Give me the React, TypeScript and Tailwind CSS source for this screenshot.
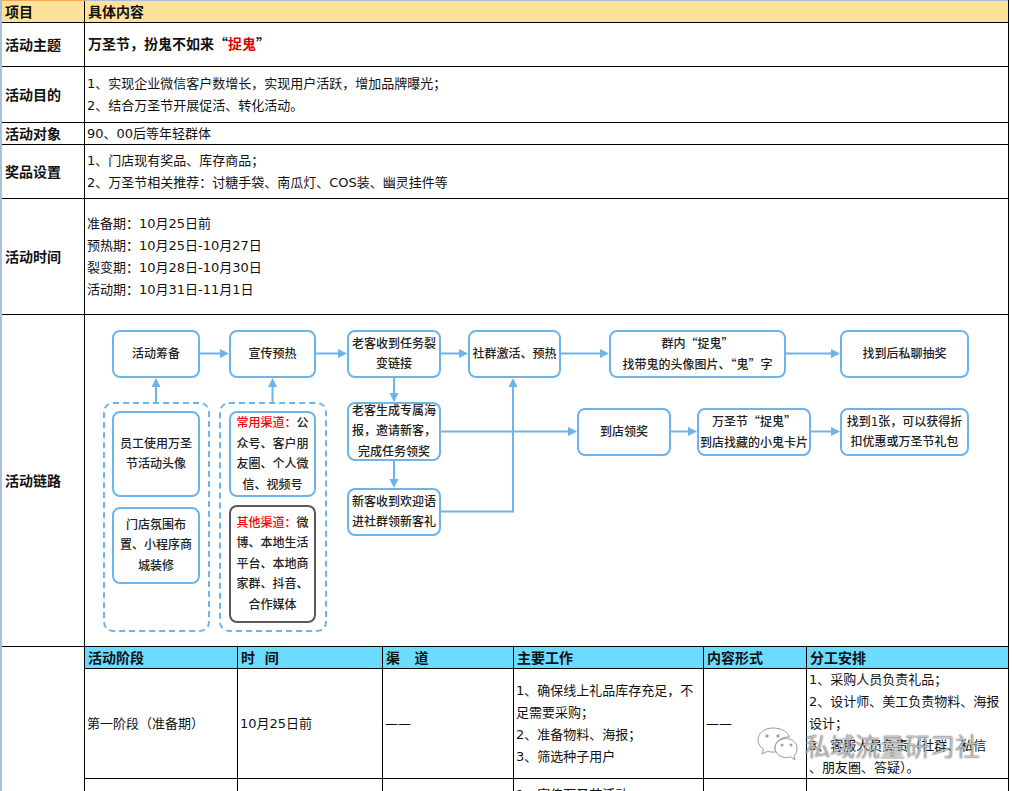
import React from "react";

const CJK = "[font-family:'Noto_Sans_CJK_SC',sans-serif]";

function Row({ h, label, bg, children }: { h: string; label: string; bg?: string; children: React.ReactNode }) {
  return (
    <div className={`flex border-b border-black box-border ${h} ${bg ?? ""}`}>
      <div className="w-[83px] shrink-0 border-r border-black flex items-center pl-[3px] font-bold text-[14px] leading-none">{label}</div>
      <div className="flex-1 min-w-0 flex flex-col justify-center pl-[2px] leading-[22px]">{children}</div>
    </div>
  );
}

const boxBlue = "absolute box-border border-2 border-[#6cb4ea] rounded-[8px] bg-white flex items-center justify-center text-center text-[12px] leading-[20.5px] font-medium text-[#222]";

function Arrow({ x1, y1, x2, y2 }: { x1: number; y1: number; x2: number; y2: number }) {
  const s = 4.5;
  const l = 9;
  let pts = "";
  let ex = x2;
  let ey = y2;
  if (x2 > x1) { pts = `${x2},${y2} ${x2 - l},${y2 - s} ${x2 - l},${y2 + s}`; ex = x2 - l; }
  else if (y2 > y1) { pts = `${x2},${y2} ${x2 - s},${y2 - l} ${x2 + s},${y2 - l}`; ey = y2 - l; }
  else { pts = `${x2},${y2} ${x2 - s},${y2 + l} ${x2 + s},${y2 + l}`; ey = y2 + l; }
  return (
    <g>
      <line x1={x1} y1={y1} x2={ex} y2={ey} stroke="#6cb4ea" strokeWidth="2" />
      <polygon points={pts} fill="#6cb4ea" />
    </g>
  );
}

function Flow() {
  return (
    <div className="relative h-[331px] w-full">
      <svg className="absolute left-0 top-0" width="923" height="331" viewBox="0 0 923 331">
        <Arrow x1={115} y1={38.5} x2={144} y2={38.5} />
        <Arrow x1={231} y1={38.5} x2={262} y2={38.5} />
        <Arrow x1={356} y1={38.5} x2={383} y2={38.5} />
        <Arrow x1={476} y1={38.5} x2={524} y2={38.5} />
        <Arrow x1={701} y1={38.5} x2={755} y2={38.5} />
        <Arrow x1={71} y1={87} x2={71} y2={63} />
        <Arrow x1={187.5} y1={87} x2={187.5} y2={63} />
        <Arrow x1={309} y1={63} x2={309} y2={87} />
        <Arrow x1={309} y1={146} x2={309} y2={173} />
        <Arrow x1={356} y1={116.5} x2={492} y2={116.5} />
        <Arrow x1={586} y1={116.5} x2={612} y2={116.5} />
        <Arrow x1={726} y1={116.5} x2={755} y2={116.5} />
        <path d="M356 196.5H428V72" fill="none" stroke="#6cb4ea" strokeWidth="2" />
        <polygon points="428,63 423.5,72 432.5,72" fill="#6cb4ea" />
      </svg>

      <div className="absolute left-[18px] top-[87px] w-[107px] h-[230px] box-border border-2 border-dashed border-[#6cb4ea] rounded-[10px]" />
      <div className="absolute left-[134px] top-[87px] w-[108px] h-[230px] box-border border-2 border-dashed border-[#6cb4ea] rounded-[10px]" />

      <div className={`${boxBlue} left-[27px] top-[15px] w-[88px] h-[48px]`}>活动筹备</div>
      <div className={`${boxBlue} left-[144px] top-[15px] w-[87px] h-[48px]`}>宣传预热</div>
      <div className={`${boxBlue} left-[262px] top-[15px] w-[94px] h-[48px]`}><span>老客收到任务裂<br />变链接</span></div>
      <div className={`${boxBlue} left-[383px] top-[15px] w-[93px] h-[48px]`}>社群激活、预热</div>
      <div className={`${boxBlue} left-[524px] top-[15px] w-[177px] h-[48px]`}><span>群内<span className={CJK}>“</span>捉鬼<span className={CJK}>”</span><br />找带鬼的头像图片、<span className={CJK}>“</span>鬼<span className={CJK}>”</span>字</span></div>
      <div className={`${boxBlue} left-[755px] top-[15px] w-[129px] h-[48px]`}>找到后私聊抽奖</div>

      <div className={`${boxBlue} left-[492px] top-[93px] w-[94px] h-[48px]`}>到店领奖</div>
      <div className={`${boxBlue} left-[612px] top-[93px] w-[114px] h-[48px]`}><span>万圣节<span className={CJK}>“</span>捉鬼<span className={CJK}>”</span><br />到店找藏的小鬼卡片</span></div>
      <div className={`${boxBlue} left-[755px] top-[93px] w-[129px] h-[48px]`}><span>找到1张，可以获得折<br />扣优惠或万圣节礼包</span></div>

      <div className={`${boxBlue} left-[27px] top-[96px] w-[88px] h-[86px]`}><span>员工使用万圣<br />节活动头像</span></div>
      <div className={`${boxBlue} left-[27px] top-[192px] w-[88px] h-[77px]`}><span>门店氛围布<br />置、小程序商<br />城装修</span></div>
      <div className={`${boxBlue} left-[144px] top-[96px] w-[87px] h-[86px]`}><span><span className="text-[#ff0000]">常用渠道：</span>公<br />众号、客户朋<br />友圈、个人微<br />信、视频号</span></div>
      <div className={`${boxBlue} !border-[#595959] left-[144px] top-[190px] w-[87px] h-[118px]`}><span><span className="text-[#ff0000]">其他渠道：</span>微<br />博、本地生活<br />平台、本地商<br />家群、抖音、<br />合作媒体</span></div>

      <div className={`${boxBlue} left-[262px] top-[87px] w-[94px] h-[59px]`}><span>老客生成专属海<br />报，邀请新客，<br />完成任务领奖</span></div>
      <div className={`${boxBlue} left-[262px] top-[173px] w-[94px] h-[48px]`}><span>新客收到欢迎语<br />进社群领新客礼</span></div>
    </div>
  );
}

const cols = ["w-[153px]", "w-[145px]", "w-[131px]", "w-[190px]", "w-[103px]", "w-[200px]"];

function SubTable() {
  return (
    <div className="flex">
      <div className="w-[83px] shrink-0 border-r border-black" />
      <div className="flex-1 min-w-0">
        <div className="flex h-[22px] box-border border-b border-black bg-[#6bdcff] font-bold text-[14px]">
          {["活动阶段", "时\u00a0\u00a0间", "渠\u00a0\u00a0\u00a0道", "主要工作", "内容形式", "分工安排"].map((t, i) => (
            <div key={t} className={`${cols[i]} box-border ${i < 5 ? "border-r border-black" : ""} flex items-center pl-[3px] leading-none whitespace-pre`}>{t}</div>
          ))}
        </div>
        <div className="flex h-[110px] box-border border-b border-black leading-[22px]">
          <div className={`${cols[0]} box-border border-r border-black flex items-center pl-[2px]`}>第一阶段（准备期）</div>
          <div className={`${cols[1]} box-border border-r border-black flex items-center pl-[2px]`}>10月25日前</div>
          <div className={`${cols[2]} box-border border-r border-black flex items-center pl-[2px]`}>——</div>
          <div className={`${cols[3]} box-border border-r border-black flex items-center pl-[2px]`}>
            <div>1、确保线上礼品库存充足，不足需要采购；<br />2、准备物料、海报；<br />3、筛选种子用户</div>
          </div>
          <div className={`${cols[4]} box-border border-r border-black flex items-center pl-[2px]`}>——</div>
          <div className={`${cols[5]} box-border flex items-center pl-[2px]`}>
            <div>1、采购人员负责礼品；<br />2、设计师、美工负责物料、海报设计；<br />3、客服人员负责（社群、私信<br />、朋友圈、答疑）。</div>
          </div>
        </div>
        <div className="flex h-[13px] overflow-hidden leading-[22px]">
          <div className={`${cols[0]} box-border border-r border-black`} />
          <div className={`${cols[1]} box-border border-r border-black`} />
          <div className={`${cols[2]} box-border border-r border-black`} />
          <div className={`${cols[3]} box-border border-r border-black pl-[2px] pt-[5px]`}>1、宣传万圣节活动</div>
          <div className={`${cols[4]} box-border border-r border-black`} />
          <div className={cols[5]} />
        </div>
      </div>
    </div>
  );
}

function Watermark() {
  return (
    <div className="absolute left-[756px] top-[726px] flex items-center gap-[7px] pointer-events-none">
      <svg width="42" height="38" viewBox="0 0 42 38">
        <path d="M17 2C8 2 2 7.500 2 14c0 4 2 7 5.500 9.500L6 28l5.500-2.700c2 .6 3.500.8 5.500.8 1 0 1.500 0 2.500-.2C19 24.500 19 23 19 22c0-6.500 6-11 13-11h1.500C32 6 25.500 2 17 2z" fill="#fff" fillOpacity="0.8" stroke="#9a9a9a" strokeWidth="1" />
        <path d="M41 22c0-5.500-5.500-9.500-10.500-9.500-6.500 0-11.500 4.200-11.500 9.500s5 9.500 11.500 9.500c1.500 0 3-.3 4.200-.7L39 34l-1-4c2-2 3-4.500 3-8z" fill="#fff" fillOpacity="0.8" stroke="#9a9a9a" strokeWidth="1" />
        <circle cx="11" cy="10" r="1.700" fill="#a0a0a0" />
        <circle cx="22" cy="10" r="1.700" fill="#a0a0a0" />
        <circle cx="26" cy="19" r="1.500" fill="#a0a0a0" />
        <circle cx="35" cy="19" r="1.500" fill="#a0a0a0" />
      </svg>
      <span className={`${CJK} font-light text-[25px] leading-none whitespace-nowrap text-white/70 [text-shadow:0_0_1px_#333,0_0_2px_#777]`}>私域流量研习社</span>
    </div>
  );
}

export default function App() {
  return (
    <div className="relative h-[791px] w-[1012px] overflow-hidden bg-white flex text-[13px] text-[#111] [font-family:'DejaVu_Sans','Noto_Sans_CJK_SC',sans-serif]">
      <div className="w-[2px] shrink-0 bg-[#a9c0dc]" />
      <div className="w-[1007px] shrink-0 flex flex-col border-r border-black box-border h-[791px] overflow-hidden">
        <div className="flex h-px shrink-0">
          <div className="w-[83px] bg-[#f5a94e]" />
          <div className="flex-1 bg-[#a9c0dc]" />
        </div>
        <Row h="h-[22px] shrink-0" label="项目" bg="bg-[#ffe299]">
          <div className="font-bold text-[14px] pl-px">具体内容</div>
        </Row>
        <Row h="h-[44px] shrink-0" label="活动主题">
          <div className="font-bold text-[14px] pl-px -mt-[3px]">万圣节，扮鬼不如来<span className={CJK}>“</span><span className="text-[#e00000]">捉鬼</span><span className={CJK}>”</span></div>
        </Row>
        <Row h="h-[56px] shrink-0" label="活动目的">
          <div>1、实现企业微信客户数增长，实现用户活跃，增加品牌曝光；</div>
          <div>2、结合万圣节开展促活、转化活动。</div>
        </Row>
        <Row h="h-[22px] shrink-0" label="活动对象">
          <div>90、00后等年轻群体</div>
        </Row>
        <Row h="h-[54px] shrink-0" label="奖品设置">
          <div>1、门店现有奖品、库存商品；</div>
          <div>2、万圣节相关推荐：讨糖手袋、南瓜灯、COS装、幽灵挂件等</div>
        </Row>
        <Row h="h-[116px] shrink-0" label="活动时间">
          <div>准备期：10月25日前</div>
          <div>预热期：10月25日-10月27日</div>
          <div>裂变期：10月28日-10月30日</div>
          <div>活动期：10月31日-11月1日</div>
        </Row>
        <div className="flex border-b border-black box-border h-[332px] shrink-0">
          <div className="w-[83px] shrink-0 border-r border-black flex items-center pl-[3px] font-bold text-[14px] leading-none">活动链路</div>
          <div className="flex-1 min-w-0"><Flow /></div>
        </div>
        <SubTable />
      </div>
      <Watermark />
    </div>
  );
}
